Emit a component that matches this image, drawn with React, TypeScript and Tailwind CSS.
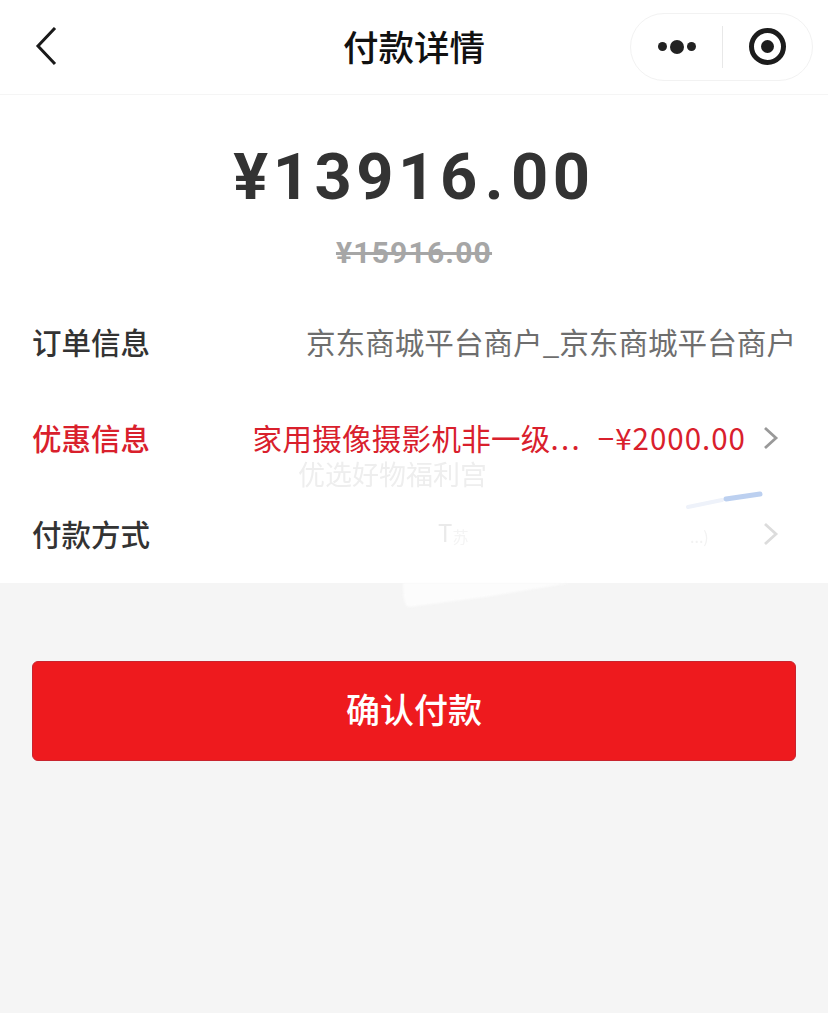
const cjk = "font-['Noto_Sans_CJK_SC','Noto_Sans',sans-serif]";

function Chevron({ className }: { className: string }) {
  return (
    <svg width="16" height="24" viewBox="0 0 16 24" fill="none" className={className}>
      <path d="M2 2 L13 12 L2 22" stroke="currentColor" strokeWidth="2.8" />
    </svg>
  );
}

function Row({ label, labelClass, children }: { label: string; labelClass: string; children: React.ReactNode }) {
  return (
    <div className="flex h-[96px] items-center justify-between">
      <span className={`text-[29.5px] font-medium leading-none ${labelClass}`}>{label}</span>
      {children}
    </div>
  );
}

export default function App() {
  return (
    <div className={`relative flex h-[1013px] w-[828px] flex-col overflow-hidden bg-[#f5f5f5] ${cjk}`}>
      <header className="flex h-[95px] shrink-0 items-center justify-between border-b border-[#f5f5f5] bg-white pb-[1px] pl-[30px] pr-[15px]">
        <svg width="30" height="40" viewBox="0 0 30 40" fill="none" className="text-[#1a1a1a]">
          <path d="M25 1 L8 19 L25 37" stroke="currentColor" strokeWidth="3" />
        </svg>
        <h1 className="absolute left-0 right-0 top-[26px] text-center text-[35.5px] font-medium leading-[40px] text-[#111]">付款详情</h1>
        <div className="flex h-[68px] w-[183px] items-center rounded-[34px] border border-[#f2f2f2] bg-white">
          <div className="flex w-[91px] items-center justify-center gap-[3px]">
            <span className="h-[9px] w-[9px] rounded-full bg-[#222]" />
            <span className="h-[14px] w-[14px] rounded-full bg-[#222]" />
            <span className="h-[9px] w-[9px] rounded-full bg-[#222]" />
          </div>
          <div className="h-[42px] w-px bg-[#e8e8e8]" />
          <div className="flex flex-1 items-center justify-center">
            <div className="flex h-[37px] w-[37px] items-center justify-center rounded-full border-[5px] border-[#1c1c1c]">
              <span className="h-[13px] w-[13px] rounded-full bg-[#1c1c1c]" />
            </div>
          </div>
        </div>
      </header>

      <main className="flex h-[488px] shrink-0 flex-col bg-white px-[32px]">
        <div className="flex flex-col items-center">
          <div className="mt-[39px] flex h-[86px] items-center font-['Roboto',sans-serif] text-[65px] font-bold leading-none tracking-[4.5px] text-[#333]">
            <span>¥13916</span>
            <span className="mx-[3px]">.</span>
            <span>00</span>
          </div>
          <div className="mt-[12px] flex h-[42px] items-center font-['Roboto',sans-serif] text-[30px] font-bold leading-none tracking-[1.2px] text-[#a6a6a6] line-through">
            ¥15916.00
          </div>
        </div>
        <div className="mt-[20px]">
          <Row label="订单信息" labelClass="text-[#333]">
            <span className="text-[29.6px] leading-none text-[#6e6e6e]">京东商城平台商户_京东商城平台商户</span>
          </Row>
          <Row label="优惠信息" labelClass="text-[#d9202c]">
            <div className="flex items-center pr-[17px] text-[29.5px] leading-none text-[#d9202c]">
              <span className="tracking-[0.3px]">家用摄像摄影机非一级</span>
              <span className="tracking-[2.2px]">...</span>
              <span className="ml-[16px] tracking-[1px]">−¥2000.00</span>
              <Chevron className="ml-[17px] text-[#999]" />
            </div>
          </Row>
          <Row label="付款方式" labelClass="text-[#333]">
            <div className="pr-[17px]">
              <Chevron className="text-[#dcdcdc]" />
            </div>
          </Row>
        </div>
      </main>

      <div className="px-[32px] pt-[78px]">
        <button className="flex h-[100px] w-full items-center justify-center rounded-[6px] border border-[#c8242e] bg-[#ee1a1e] pb-[5px] text-[34px] font-medium leading-none text-white">
          确认付款
        </button>
      </div>

      <span className="absolute left-[298px] top-[460px] text-[27px] leading-none text-[#eeeeee] blur-[0.5px]">优选好物福利宫</span>
      <div className="absolute left-[438px] top-[520px] flex items-end text-[24px] leading-none text-[#eaeaea] blur-[0.5px]">
        <span>T</span>
        <span className="text-[16px] text-[#f4f4f4]">苏</span>
      </div>
      <span className="absolute left-[690px] top-[528px] text-[16px] leading-none text-[#f2f2f2] blur-[0.5px]">...)</span>
      <svg className="absolute left-[660px] top-[485px] blur-[0.6px]" width="110" height="35" viewBox="0 0 110 35" fill="none">
        <path d="M28 22 L62 15" stroke="#eef2fa" strokeWidth="4" strokeLinecap="round" />
        <path d="M66 14 L100 9" stroke="#bcd0f0" strokeWidth="5" strokeLinecap="round" />
      </svg>
      <svg className="absolute left-[395px] top-[575px] blur-[1px]" width="190" height="35" viewBox="0 0 190 35" fill="none">
        <path d="M8 8 L175 8 L90 22 L14 32 C10 32 8 24 8 8 Z" fill="#fcfcfc" />
      </svg>
    </div>
  );
}
